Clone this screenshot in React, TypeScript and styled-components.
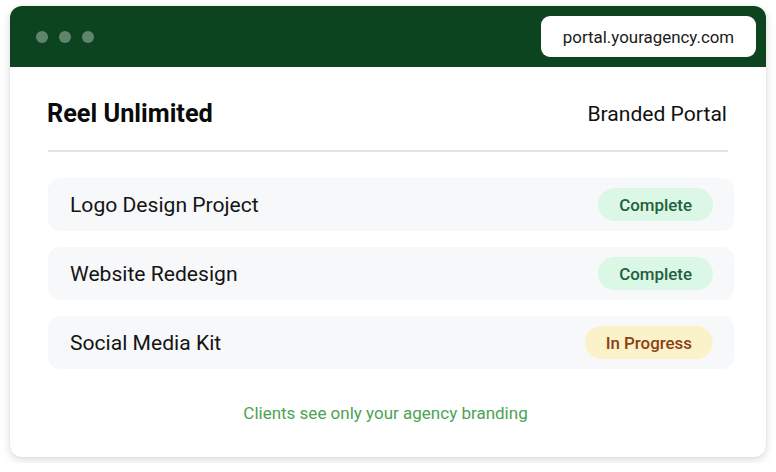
import styled, { createGlobalStyle } from 'styled-components';

const GlobalStyle = createGlobalStyle`
  body {
    margin: 0;
    background: #ffffff;
    font-family: Roboto, "Liberation Sans", sans-serif;
  }
`;

const Page = styled.div`
  padding: 6px 10px;
`;

const Card = styled.div`
  width: 756px;
  height: 451px;
  box-sizing: border-box;
  background: #ffffff;
  border-radius: 12px;
  overflow: hidden;
  box-shadow: 0 3px 10px rgba(0, 0, 0, 0.14), 0 0 2px rgba(0, 0, 0, 0.08);
  display: flex;
  flex-direction: column;
`;

const TopBar = styled.div`
  height: 61px;
  background: #0c441f;
  display: flex;
  align-items: center;
  justify-content: space-between;
  padding: 0 10px 0 26px;
`;

const Dots = styled.div`
  display: flex;
  gap: 11px;
`;

const Dot = styled.span`
  width: 12px;
  height: 12px;
  border-radius: 50%;
  background: rgba(255, 255, 255, 0.35);
`;

const Url = styled.div`
  width: 215px;
  height: 41px;
  box-sizing: border-box;
  background: #ffffff;
  border-radius: 9px;
  display: flex;
  align-items: center;
  justify-content: center;
  font-size: 16.9px;
  color: #1a1a1a;
`;

const Body = styled.div`
  flex: 1;
  padding: 33px 32px 0 38px;
  display: flex;
  flex-direction: column;
`;

const Header = styled.div`
  display: flex;
  align-items: center;
  justify-content: space-between;
  margin-right: 6px;
  padding-bottom: 22px;
  border-bottom: 2px solid #e4e4e6;
`;

const Brand = styled.h1`
  margin: 0 0 0 -1px;
  font-size: 25.3px;
  line-height: 28px;
  font-weight: 700;
  color: #0a0a0a;
`;

const Label = styled.span`
  font-size: 21.1px;
  line-height: 28px;
  color: #111111;
  margin-right: 1px;
`;

const List = styled.ul`
  list-style: none;
  margin: 26px 0 0;
  padding: 0;
  display: flex;
  flex-direction: column;
  gap: 16px;
`;

const Row = styled.li`
  height: 53px;
  box-sizing: border-box;
  background: #f7f8fa;
  border-radius: 12px;
  padding: 0 21px 0 22px;
  display: flex;
  align-items: center;
  justify-content: space-between;
`;

const Name = styled.span`
  font-size: 21.1px;
  color: #141414;
`;

type BadgeProps = { $tone: 'done' | 'progress' };

const Badge = styled.span<BadgeProps>`
  height: 33px;
  padding: 0 21px;
  border-radius: 17px;
  display: flex;
  align-items: center;
  font-size: 16.9px;
  font-weight: 500;
  background: ${({ $tone }) => ($tone === 'done' ? '#dbf7e5' : '#fcf2c9')};
  color: ${({ $tone }) => ($tone === 'done' ? '#22603e' : '#8a4016')};
`;

const Footer = styled.p`
  margin: 34px 0 0;
  padding-right: 11px;
  text-align: center;
  font-size: 17px;
  line-height: 20px;
  color: #4ca353;
`;

const projects: { name: string; status: string; tone: 'done' | 'progress' }[] = [
  { name: 'Logo Design Project', status: 'Complete', tone: 'done' },
  { name: 'Website Redesign', status: 'Complete', tone: 'done' },
  { name: 'Social Media Kit', status: 'In Progress', tone: 'progress' },
];

export default function App() {
  return (
    <Page>
      <GlobalStyle />
      <Card>
        <TopBar>
          <Dots>
            <Dot />
            <Dot />
            <Dot />
          </Dots>
          <Url>portal.youragency.com</Url>
        </TopBar>
        <Body>
          <Header>
            <Brand>Reel Unlimited</Brand>
            <Label>Branded Portal</Label>
          </Header>
          <List>
            {projects.map((p) => (
              <Row key={p.name}>
                <Name>{p.name}</Name>
                <Badge $tone={p.tone}>{p.status}</Badge>
              </Row>
            ))}
          </List>
          <Footer>Clients see only your agency branding</Footer>
        </Body>
      </Card>
    </Page>
  );
}
